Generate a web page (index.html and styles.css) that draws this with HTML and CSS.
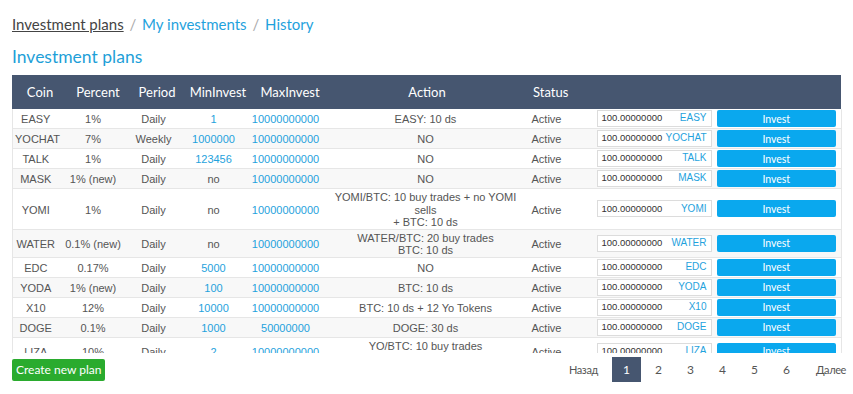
FILE: index.html
```html
<!DOCTYPE html>
<html lang="en">
<head>
    <meta charset="UTF-8">
    <meta name="viewport" content="width=device-width, initial-scale=1.0">
    <title>Investment plans</title>
    <link rel="stylesheet" href="styles.css">
</head>
<body>
    <div class="page">
        <nav class="crumbs">
            <a href="#" class="current">Investment plans</a>
            <span class="sep">/</span>
            <a href="#">My investments</a>
            <span class="sep">/</span>
            <a href="#">History</a>
        </nav>
        <h1 class="title">Investment plans</h1>

        <table class="plans-head">
            <colgroup>
                <col class="h-coin"><col class="h-percent"><col class="h-period"><col class="h-min">
                <col class="h-max"><col class="h-action"><col class="h-status"><col class="h-rest">
            </colgroup>
            <tr>
                <th>Coin</th>
                <th>Percent</th>
                <th>Period</th>
                <th>MinInvest</th>
                <th>MaxInvest</th>
                <th>Action</th>
                <th class="left">Status</th>
                <th></th>
            </tr>
        </table>

        <div class="plans-scroll">
            <table class="plans">
                <colgroup>
                    <col class="c-coin"><col class="c-percent"><col class="c-period"><col class="c-min">
                    <col class="c-max"><col class="c-action"><col class="c-status"><col class="c-amount"><col class="c-btn">
                </colgroup>
                <tbody>
                    <tr>
                        <td>EASY</td><td>1%</td><td>Daily</td><td><a href="#">1</a></td><td><a href="#">10000000000</a></td>
                        <td>EASY: 10 ds</td><td class="left">Active</td>
                        <td class="ctl"><div class="amount"><span>100.00000000</span><span class="coin">EASY</span></div></td>
                        <td class="ctl btn-cell"><button>Invest</button></td>
                    </tr>
                    <tr>
                        <td>YOCHAT</td><td>7%</td><td>Weekly</td><td><a href="#">1000000</a></td><td><a href="#">10000000000</a></td>
                        <td>NO</td><td class="left">Active</td>
                        <td class="ctl"><div class="amount"><span>100.00000000</span><span class="coin">YOCHAT</span></div></td>
                        <td class="ctl btn-cell"><button>Invest</button></td>
                    </tr>
                    <tr>
                        <td>TALK</td><td>1%</td><td>Daily</td><td><a href="#">123456</a></td><td><a href="#">10000000000</a></td>
                        <td>NO</td><td class="left">Active</td>
                        <td class="ctl"><div class="amount"><span>100.00000000</span><span class="coin">TALK</span></div></td>
                        <td class="ctl btn-cell"><button>Invest</button></td>
                    </tr>
                    <tr>
                        <td>MASK</td><td>1% (new)</td><td>Daily</td><td>no</td><td><a href="#">10000000000</a></td>
                        <td>NO</td><td class="left">Active</td>
                        <td class="ctl"><div class="amount"><span>100.00000000</span><span class="coin">MASK</span></div></td>
                        <td class="ctl btn-cell"><button>Invest</button></td>
                    </tr>
                    <tr>
                        <td>YOMI</td><td>1%</td><td>Daily</td><td>no</td><td><a href="#">10000000000</a></td>
                        <td>YOMI/BTC: 10 buy trades + no YOMI sells<br>+ BTC: 10 ds</td><td class="left">Active</td>
                        <td class="ctl"><div class="amount"><span>100.00000000</span><span class="coin">YOMI</span></div></td>
                        <td class="ctl btn-cell"><button>Invest</button></td>
                    </tr>
                    <tr>
                        <td>WATER</td><td>0.1% (new)</td><td>Daily</td><td>no</td><td><a href="#">10000000000</a></td>
                        <td>WATER/BTC: 20 buy trades<br>BTC: 10 ds</td><td class="left">Active</td>
                        <td class="ctl"><div class="amount"><span>100.00000000</span><span class="coin">WATER</span></div></td>
                        <td class="ctl btn-cell"><button>Invest</button></td>
                    </tr>
                    <tr>
                        <td>EDC</td><td>0.17%</td><td>Daily</td><td><a href="#">5000</a></td><td><a href="#">10000000000</a></td>
                        <td>NO</td><td class="left">Active</td>
                        <td class="ctl"><div class="amount"><span>100.00000000</span><span class="coin">EDC</span></div></td>
                        <td class="ctl btn-cell"><button>Invest</button></td>
                    </tr>
                    <tr>
                        <td>YODA</td><td>1% (new)</td><td>Daily</td><td><a href="#">100</a></td><td><a href="#">10000000000</a></td>
                        <td>BTC: 10 ds</td><td class="left">Active</td>
                        <td class="ctl"><div class="amount"><span>100.00000000</span><span class="coin">YODA</span></div></td>
                        <td class="ctl btn-cell"><button>Invest</button></td>
                    </tr>
                    <tr>
                        <td>X10</td><td>12%</td><td>Daily</td><td><a href="#">10000</a></td><td><a href="#">10000000000</a></td>
                        <td>BTC: 10 ds + 12 Yo Tokens</td><td class="left">Active</td>
                        <td class="ctl"><div class="amount"><span>100.00000000</span><span class="coin">X10</span></div></td>
                        <td class="ctl btn-cell"><button>Invest</button></td>
                    </tr>
                    <tr>
                        <td>DOGE</td><td>0.1%</td><td>Daily</td><td><a href="#">1000</a></td><td><a href="#">50000000</a></td>
                        <td>DOGE: 30 ds</td><td class="left">Active</td>
                        <td class="ctl"><div class="amount"><span>100.00000000</span><span class="coin">DOGE</span></div></td>
                        <td class="ctl btn-cell"><button>Invest</button></td>
                    </tr>
                    <tr>
                        <td>LIZA</td><td>10%</td><td>Daily</td><td><a href="#">2</a></td><td><a href="#">10000000000</a></td>
                        <td>YO/BTC: 10 buy trades<br>BTC: 10 ds</td><td class="left">Active</td>
                        <td class="ctl"><div class="amount"><span>100.00000000</span><span class="coin">LIZA</span></div></td>
                        <td class="ctl btn-cell"><button>Invest</button></td>
                    </tr>
                </tbody>
            </table>
        </div>

        <div class="footer">
            <button class="create">Create new plan</button>
            <div class="pager">
                <a href="#" class="pg-prev">Назад</a>
                <a href="#" class="active">1</a>
                <a href="#">2</a>
                <a href="#">3</a>
                <a href="#">4</a>
                <a href="#">5</a>
                <a href="#">6</a>
                <a href="#" class="pg-next">Далее</a>
            </div>
        </div>
    </div>
</body>
</html>
```

FILE: styles.css
```css
body {
    margin: 0;
    padding: 0;
    background-color: #fff;
    font-family: 'Lato', 'Noto Sans', sans-serif;
    color: #444;
    overflow: hidden;
}
a {
    color: #1fa2dd;
    text-decoration: none;
}
.page {
    padding: 14px 0 0 12px;
}
.crumbs {
    height: 20px;
    line-height: 20px;
    font-size: 15px;
    white-space: nowrap;
}
.crumbs .current {
    color: #444;
    text-decoration: underline;
}
.crumbs .sep {
    color: #aaa;
    margin: 0 2px;
}
.title {
    margin: 12px 0 7px;
    height: 22px;
    line-height: 22px;
    font-size: 17.5px;
    font-weight: normal;
    color: #1e9fd8;
}
.plans-head {
    width: 829px;
    height: 34px;
    border-collapse: collapse;
    table-layout: fixed;
    background-color: #465670;
    color: white;
}
.plans-head th {
    font-weight: normal;
    font-size: 13px;
    padding: 0;
    text-align: center;
    white-space: nowrap;
}
.plans-head th.left {
    text-align: left;
    padding-left: 9px;
}
.h-coin { width: 56px; }
.h-percent { width: 60px; }
.h-period { width: 58px; }
.h-min { width: 64px; }
.h-max { width: 80px; }
.h-action { width: 194px; }
.h-status { width: 68px; }
.h-rest { width: 249px; }

.plans-scroll {
    height: 244px;
    overflow-y: scroll;
}
.plans-scroll::-webkit-scrollbar {
    width: 12px;
}
.plans-scroll::-webkit-scrollbar-track {
    background: transparent;
}
.plans-scroll::-webkit-scrollbar-thumb {
    background-color: #e6e6ea;
    border-left: 6px solid transparent;
    border-right: 1px solid transparent;
    background-clip: padding-box;
}
.plans {
    width: 829px;
    border-collapse: collapse;
    table-layout: fixed;
    font-family: 'Liberation Sans', Arial, sans-serif;
    font-size: 11px;
    line-height: 12.5px;
    color: #555;
    border-left: 1px solid #e6e6e6;
    border-right: 1px solid #e6e6e6;
}
.c-coin { width: 46px; }
.c-percent { width: 69px; }
.c-period { width: 52px; }
.c-min { width: 68px; }
.c-max { width: 76px; }
.c-action { width: 204px; }
.c-status { width: 65px; }
.c-amount { width: 121px; }
.c-btn { width: 128px; }

.plans tr {
    border-bottom: 1px solid #e6e6e6;
}
.plans tr:nth-child(even) {
    background-color: #f8f8f8;
}
.plans td {
    padding: 2px 2px 0;
    text-align: center;
    vertical-align: middle;
    white-space: normal;
}
.plans td.left {
    text-align: left;
    padding-left: 4px;
}
.plans td.ctl {
    padding: 1px 2px 1px 4px;
}
.plans td.btn-cell {
    padding: 1px 5px 1px 3px;
}
.amount {
    display: flex;
    justify-content: space-between;
    align-items: center;
    height: 15px;
    padding: 0 4px;
    border: 1px solid #dcdcdc;
    background-color: #fff;
    font-size: 9.5px;
    color: #333;
}
.amount .coin {
    color: #1fa2dd;
    font-size: 10px;
}
.plans button {
    display: block;
    width: 100%;
    height: 17px;
    padding: 0;
    border: none;
    border-radius: 2px;
    background-color: #0aa8ee;
    color: white;
    font-family: 'Lato', 'Noto Sans', sans-serif;
    font-size: 10.5px;
    cursor: pointer;
}

.footer {
    display: flex;
    justify-content: space-between;
    align-items: center;
    margin-top: 4px;
    padding-right: 7px;
}
.create {
    height: 22px;
    padding: 0 4px;
    border: none;
    border-radius: 2px;
    background-color: #2aab2e;
    color: white;
    font-family: 'Lato', 'Noto Sans', sans-serif;
    font-size: 12px;
    white-space: nowrap;
    cursor: pointer;
}
.pager {
    display: flex;
    gap: 3px;
    font-size: 12px;
}
.pager a {
    display: block;
    min-width: 29px;
    height: 25px;
    line-height: 25px;
    text-align: center;
    color: #555;
}
.pager a.active {
    background-color: #465670;
    color: white;
}
.pager .pg-prev,
.pager .pg-next {
    min-width: 0;
    font-size: 11px;
    letter-spacing: -0.4px;
}
.pager .pg-prev {
    padding-right: 11px;
}
.pager .pg-next {
    padding-left: 12px;
}
```
